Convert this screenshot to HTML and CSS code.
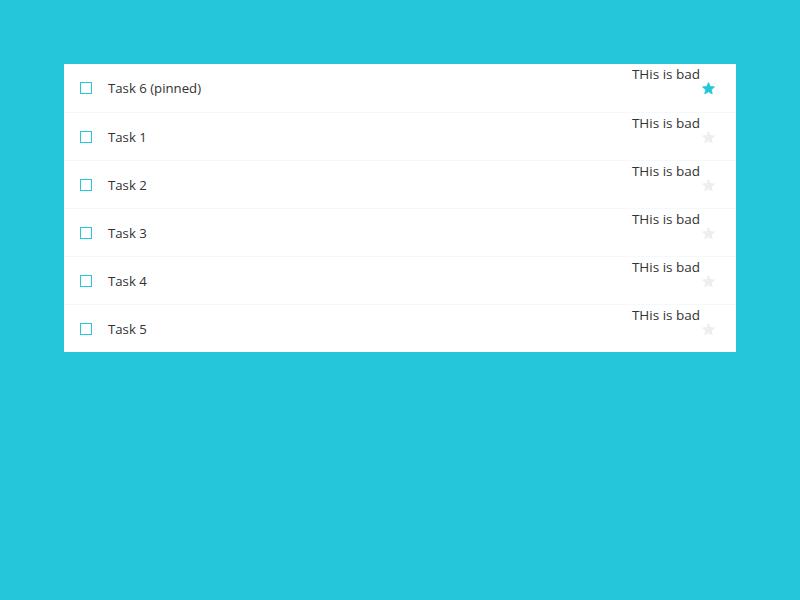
FILE: index.html
```html
<!DOCTYPE html>
<html>
<head>
<meta charset="utf-8">
<link rel="stylesheet" href="styles.css">
</head>
<body>
<div class="page">
  <div class="list">
    <div class="item pinned">
      <span class="check"></span>
      <span class="title">Task 6 (pinned)</span>
      <span class="note">THis is bad</span>
      <svg class="star" viewBox="0 0 24 24"><path d="M12 2.5l2.9 6.2 6.8.7-5.1 4.6 1.4 6.7L12 17.3l-6 3.4 1.4-6.7-5.1-4.6 6.8-.7z"/></svg>
    </div>
    <div class="item">
      <span class="check"></span>
      <span class="title">Task 1</span>
      <span class="note">THis is bad</span>
      <svg class="star" viewBox="0 0 24 24"><path d="M12 2.5l2.9 6.2 6.8.7-5.1 4.6 1.4 6.7L12 17.3l-6 3.4 1.4-6.7-5.1-4.6 6.8-.7z"/></svg>
    </div>
    <div class="item">
      <span class="check"></span>
      <span class="title">Task 2</span>
      <span class="note">THis is bad</span>
      <svg class="star" viewBox="0 0 24 24"><path d="M12 2.5l2.9 6.2 6.8.7-5.1 4.6 1.4 6.7L12 17.3l-6 3.4 1.4-6.7-5.1-4.6 6.8-.7z"/></svg>
    </div>
    <div class="item">
      <span class="check"></span>
      <span class="title">Task 3</span>
      <span class="note">THis is bad</span>
      <svg class="star" viewBox="0 0 24 24"><path d="M12 2.5l2.9 6.2 6.8.7-5.1 4.6 1.4 6.7L12 17.3l-6 3.4 1.4-6.7-5.1-4.6 6.8-.7z"/></svg>
    </div>
    <div class="item">
      <span class="check"></span>
      <span class="title">Task 4</span>
      <span class="note">THis is bad</span>
      <svg class="star" viewBox="0 0 24 24"><path d="M12 2.5l2.9 6.2 6.8.7-5.1 4.6 1.4 6.7L12 17.3l-6 3.4 1.4-6.7-5.1-4.6 6.8-.7z"/></svg>
    </div>
    <div class="item">
      <span class="check"></span>
      <span class="title">Task 5</span>
      <span class="note">THis is bad</span>
      <svg class="star" viewBox="0 0 24 24"><path d="M12 2.5l2.9 6.2 6.8.7-5.1 4.6 1.4 6.7L12 17.3l-6 3.4 1.4-6.7-5.1-4.6 6.8-.7z"/></svg>
    </div>
  </div>
</div>
</body>
</html>
```
FILE: styles.css
```css
html, body {
  margin: 0;
  padding: 0;
  height: 100%;
  background: #26c6da;
}
body {
  font-family: "Open Sans", "Lato", sans-serif;
  color: #333;
}
.page {
  padding: 64px;
}
.list {
  background: #fff;
}
.item {
  display: flex;
  align-items: center;
  height: 48px;
  box-sizing: border-box;
  border-top: 1px solid #f0f9fb;
  padding: 0 20px 0 16px;
}
.item.pinned {
  border-top: none;
}
.check {
  width: 10px;
  height: 10px;
  border: 1px solid #26c6da;
  flex: none;
}
.title {
  margin-left: 16px;
  font-size: 13.2px;
  flex: 1;
}
.note {
  align-self: flex-start;
  font-size: 13.5px;
  line-height: 18px;
  margin-top: 1px;
  margin-right: 1px;
}
.star {
  width: 15px;
  height: 15px;
  margin-top: 1px;
  fill: #eee;
  stroke: #eee;
  stroke-width: 1.2;
  stroke-linejoin: round;
  flex: none;
}
.pinned .star {
  fill: #26c6da;
  stroke: #26c6da;
}
```
